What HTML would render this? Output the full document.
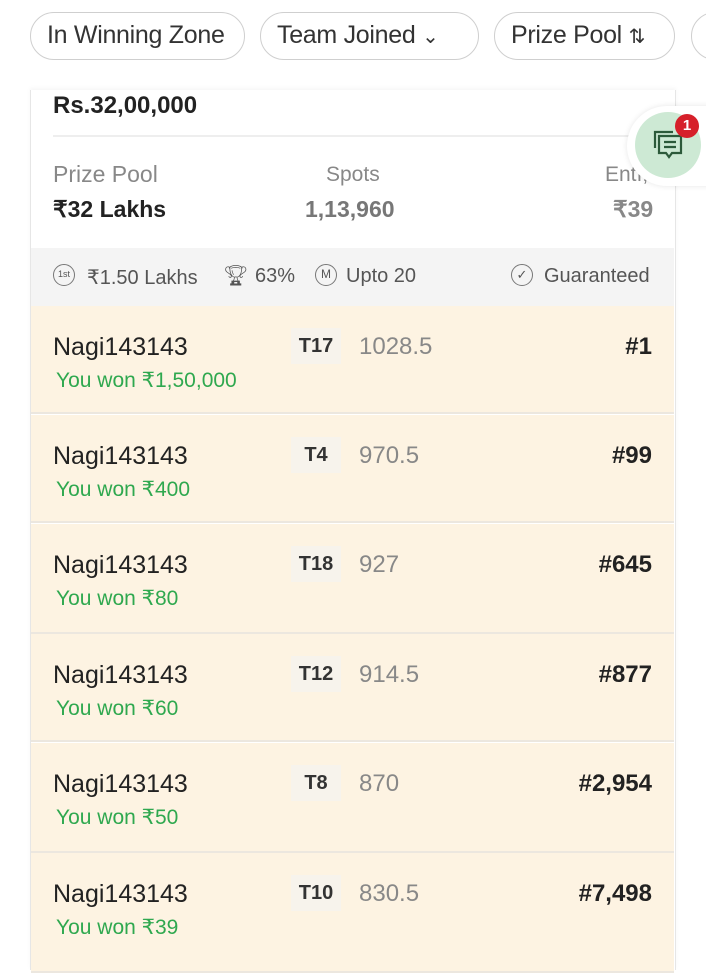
<!DOCTYPE html>
<html><head><meta charset="utf-8"><style>
*{margin:0;padding:0;box-sizing:border-box}
body{width:706px;height:959px;overflow:hidden;background:#fff;font-family:"Liberation Sans",sans-serif;position:relative;color:#222}
.pill{position:absolute;top:12px;height:48px;border:1.5px solid #cfcfcf;border-radius:24px;font-size:25px;line-height:45px;color:#333;padding-left:16px;letter-spacing:-0.3px}
.card{position:absolute;left:30px;top:90px;width:646px;height:880px;border-left:1.5px solid #e6e6e6;border-right:1.5px solid #e6e6e6;background:#fff;box-shadow:0 -2px 4px rgba(0,0,0,0.04)}
.abs{position:absolute}
.row{position:absolute;left:0;width:643px;height:108px;background:#fdf3e2;border-bottom:2px solid #ece7df}
.nm{position:absolute;left:22px;top:27px;font-size:25px;color:#222}
.won{position:absolute;left:25px;top:62px;font-size:21px;color:#2fa84f}
.tb{position:absolute;left:260px;top:22px;width:50px;height:36px;background:#f7f3ec;font-size:20px;font-weight:bold;text-align:center;line-height:36px;color:#333}
.sc{position:absolute;left:328px;top:27px;font-size:24px;color:#888}
.rk{position:absolute;right:22px;top:27px;font-size:24px;font-weight:bold;color:#222}
</style></head><body>
<div class="pill" style="left:30px;width:215px">In Winning Zone</div>
<div class="pill" style="left:260px;width:219px">Team Joined <span style="font-size:20px">&#8964;</span></div>
<div class="pill" style="left:494px;width:181px">Prize Pool <span style="font-size:20px">&#8645;</span></div>
<div class="pill" style="left:691px;width:60px"></div>

<div class="card">
 <div class="abs" style="left:22px;top:2px;font-size:24px;font-weight:bold">Rs.32,00,000</div>
 <div class="abs" style="left:22px;top:45px;width:608px;height:1.5px;background:#eee"></div>
 <div class="abs" style="left:22px;top:71px;font-size:23px;color:#888">Prize Pool</div>
 <div class="abs" style="left:22px;top:106px;font-size:23px;font-weight:bold">₹32 Lakhs</div>
 <div class="abs" style="left:295px;top:73px;font-size:21px;color:#888">Spots</div>
 <div class="abs" style="left:274px;top:106px;font-size:23px;font-weight:bold;color:#777">1,13,960</div>
 <div class="abs" style="left:574px;top:73px;font-size:21px;color:#888">Entı,</div>
 <div class="abs" style="left:582px;top:106px;font-size:23px;font-weight:bold;color:#888">₹39</div>
 <div class="abs" style="left:0;top:158px;width:643px;height:58px;background:#f4f4f4;font-size:20px;color:#555">
  <div class="abs" style="left:22px;top:16px;width:22px;height:22px;border:1.5px solid #777;border-radius:50%;font-size:9px;text-align:center;line-height:19px">1st</div>
  <div class="abs" style="left:56px;top:17px">₹1.50 Lakhs</div>
  <div class="abs" style="left:192px;top:15px;font-size:20px">🏆︎</div>
  <div class="abs" style="left:224px;top:17px">63%</div>
  <div class="abs" style="left:284px;top:16px;width:22px;height:22px;border:1.5px solid #777;border-radius:50%;font-size:12px;text-align:center;line-height:19px">M</div>
  <div class="abs" style="left:315px;top:17px">Upto 20</div>
  <div class="abs" style="left:480px;top:16px;width:22px;height:22px;border:1.5px solid #777;border-radius:50%;font-size:13px;text-align:center;line-height:19px">✓</div>
  <div class="abs" style="left:513px;top:17px">Guaranteed</div>
 </div>
 <div class="row" style="top:216px"><div class="nm">Nagi143143</div><div class="won">You won ₹1,50,000</div><div class="tb">T17</div><div class="sc">1028.5</div><div class="rk">#1</div></div>
 <div class="row" style="top:325px"><div class="nm">Nagi143143</div><div class="won">You won ₹400</div><div class="tb">T4</div><div class="sc">970.5</div><div class="rk">#99</div></div>
 <div class="row" style="top:434px;height:110px"><div class="nm">Nagi143143</div><div class="won">You won ₹80</div><div class="tb">T18</div><div class="sc">927</div><div class="rk">#645</div></div>
 <div class="row" style="top:544px"><div class="nm">Nagi143143</div><div class="won">You won ₹60</div><div class="tb">T12</div><div class="sc">914.5</div><div class="rk">#877</div></div>
 <div class="row" style="top:653px;height:110px"><div class="nm">Nagi143143</div><div class="won">You won ₹50</div><div class="tb">T8</div><div class="sc">870</div><div class="rk">#2,954</div></div>
 <div class="row" style="top:763px;height:120px"><div class="nm">Nagi143143</div><div class="won">You won ₹39</div><div class="tb">T10</div><div class="sc">830.5</div><div class="rk">#7,498</div></div>
</div>

<div class="abs" style="left:627px;top:106px;width:86px;height:80px;background:#fff;border-radius:40px 0 0 40px;box-shadow:0 0 6px rgba(0,0,0,0.1)"></div>
<div class="abs" style="left:635px;top:112px;width:66px;height:66px;border-radius:50%;background:#cde9d4"></div>
<svg class="abs" style="left:652px;top:128px" width="32" height="34" viewBox="0 0 32 34" fill="none" stroke="#2c5a3a" stroke-width="2.2">
<path d="M3 20V4h18"/><path d="M7 8h22v17h-9l-3 4-3-4H7z"/><path d="M12 14h12M12 19h12"/></svg>
<div class="abs" style="left:675px;top:114px;width:24px;height:24px;border-radius:50%;background:#d6202a;color:#fff;font-size:15px;font-weight:bold;text-align:center;line-height:24px">1</div>
</body></html>
